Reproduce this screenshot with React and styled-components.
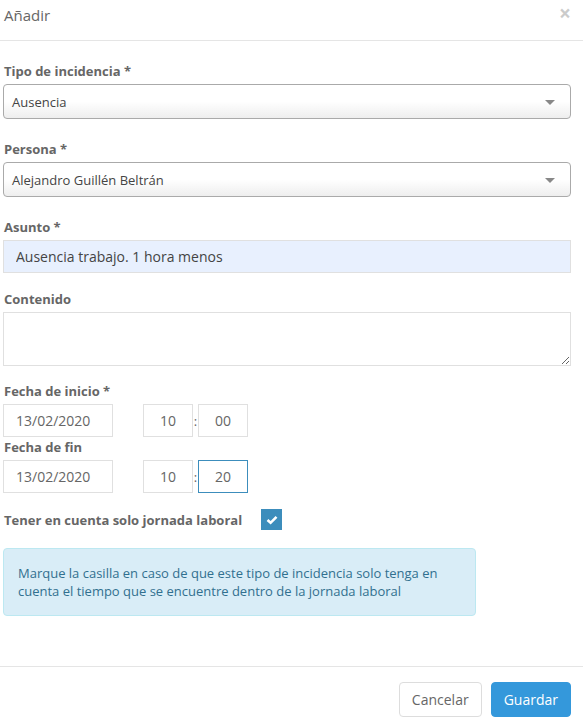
import React from 'react';
import styled, { createGlobalStyle } from 'styled-components';

const Global = createGlobalStyle`
  html, body { margin: 0; padding: 0; background: #fff; }
  body { font-family: "Open Sans", "Liberation Sans", sans-serif; color: #555; }
  * { box-sizing: border-box; }
`;

const Modal = styled.div`
  width: 583px;
  min-height: 721px;
  display: flex;
  flex-direction: column;
  background: #fff;
`;

const Header = styled.div`
  height: 41px;
  display: flex;
  align-items: flex-start;
  justify-content: space-between;
  padding: 5px 12px 0 4px;
  border-bottom: 1px solid #e5e5e5;
`;

const Title = styled.h4`
  margin: 0;
  font-size: 15px;
  font-weight: 400;
  color: #666;
  line-height: 20px;
`;

const Close = styled.button`
  border: 0;
  background: none;
  padding: 0;
  margin-top: -2px;
  font-family: "Open Sans", sans-serif;
  font-size: 21px;
  font-weight: 700;
  line-height: 1;
  color: #000;
  opacity: 0.2;
  cursor: pointer;
`;

const Body = styled.div`
  padding: 21px 12px 0 3px;
  flex: 1;
`;

const Group = styled.div`
  margin-bottom: ${p => p.$mb ?? 21}px;
`;

const Label = styled.label`
  display: block;
  padding-left: 1px;
  margin-bottom: 4px;
  font-size: 13px;
  font-weight: 700;
  line-height: 18px;
  color: #666;
`;

const Select = styled.div`
  position: relative;
  height: 35px;
  display: flex;
  align-items: center;
  padding: 0 30px 0 8px;
  border: 1px solid #aaa;
  border-radius: 4px;
  background: linear-gradient(to bottom, #fff 50%, #eee 100%);
  font-size: 13px;
  color: #444;
`;

const Arrow = styled.span`
  position: absolute;
  right: 15px;
  top: 15px;
  border-style: solid;
  border-width: 5px 5px 0 5px;
  border-color: #888 transparent transparent transparent;
`;

const Input = styled.input`
  display: block;
  width: ${p => p.$w ? `${p.$w}px` : '100%'};
  height: 33px;
  padding: 0 12px;
  border: 1px solid ${p => p.$focus ? '#3c8dbc' : '#e0e0e0'};
  background: ${p => p.$filled ? '#e8f0fe' : '#fff'};
  font-family: "Open Sans", sans-serif;
  font-size: 14px;
  color: ${p => p.$filled ? '#444' : '#666'};
  text-align: ${p => p.$center ? 'center' : 'left'};
  outline: none;
  border-radius: 0;
`;

const Textarea = styled.textarea`
  display: block;
  width: 100%;
  height: 54px;
  border: 1px solid #e0e0e0;
  font-family: "Open Sans", sans-serif;
  font-size: 14px;
  resize: vertical;
  outline: none;
`;

const DateRow = styled.div`
  display: flex;
  align-items: center;
`;

const TimeGroup = styled.div`
  display: flex;
  align-items: center;
  margin-left: 30px;
`;

const Colon = styled.span`
  width: 5px;
  text-align: center;
  font-size: 13px;
  color: #666;
`;

const CheckRow = styled.div`
  display: flex;
  align-items: center;
  gap: 19px;
  margin: 16px 0 18px;
`;

const CheckLabel = styled.span`
  padding-left: 1px;
  font-size: 13px;
  font-weight: 700;
  color: #666;
`;

const Check = styled.span`
  width: 21px;
  height: 21px;
  background: #3c8dbc;
  display: flex;
  align-items: center;
  justify-content: center;
`;

const Info = styled.div`
  width: 473px;
  padding: 15px 14px;
  border: 1px solid #bce8f1;
  border-radius: 4px;
  background: #d9edf7;
  color: #31708f;
  font-size: 13px;
  line-height: 18px;
`;

const Footer = styled.div`
  display: flex;
  justify-content: flex-end;
  gap: 9px;
  padding: 15px 12px 4px;
  border-top: 1px solid #e5e5e5;
  margin-top: 50px;
`;

const Button = styled.button`
  height: 35px;
  padding: 0 12px;
  border: 1px solid ${p => p.$primary ? '#3498db' : '#ddd'};
  border-radius: 4px;
  background: ${p => p.$primary ? '#3498db' : '#fff'};
  color: ${p => p.$primary ? '#fff' : '#666'};
  font-family: "Open Sans", sans-serif;
  font-size: 14px;
  cursor: pointer;
`;

function DateTime({ date, hour, minute, focus }) {
  return (
    <DateRow>
      <Input $w={110} defaultValue={date} />
      <TimeGroup>
        <Input $w={50} $center defaultValue={hour} />
        <Colon>:</Colon>
        <Input $w={50} $center $focus={focus} defaultValue={minute} />
      </TimeGroup>
    </DateRow>
  );
}

export default function App() {
  return (
    <Modal>
      <Global />
      <Header>
        <Title>Añadir</Title>
        <Close>×</Close>
      </Header>
      <Body>
        <Group>
          <Label>Tipo de incidencia *</Label>
          <Select>Ausencia<Arrow /></Select>
        </Group>
        <Group>
          <Label>Persona *</Label>
          <Select>Alejandro Guillén Beltrán<Arrow /></Select>
        </Group>
        <Group $mb={17}>
          <Label>Asunto *</Label>
          <Input $filled defaultValue="Ausencia trabajo. 1 hora menos" />
        </Group>
        <Group $mb={16}>
          <Label>Contenido</Label>
          <Textarea />
        </Group>
        <Group $mb={1}>
          <Label>Fecha de inicio *</Label>
          <DateTime date="13/02/2020" hour="10" minute="00" />
        </Group>
        <Group $mb={0}>
          <Label>Fecha de fin</Label>
          <DateTime date="13/02/2020" hour="10" minute="20" focus />
        </Group>
        <CheckRow>
          <CheckLabel>Tener en cuenta solo jornada laboral</CheckLabel>
          <Check>
            <svg width="12" height="10" viewBox="0 0 12 10">
              <path d="M1.5 5 L4.6 7.8 L10.5 1.8" fill="none" stroke="#fff" strokeWidth="2.6" />
            </svg>
          </Check>
        </CheckRow>
        <Info>
          Marque la casilla en caso de que este tipo de incidencia solo tenga en cuenta el tiempo que se encuentre dentro de la jornada laboral
        </Info>
      </Body>
      <Footer>
        <Button>Cancelar</Button>
        <Button $primary>Guardar</Button>
      </Footer>
    </Modal>
  );
}
